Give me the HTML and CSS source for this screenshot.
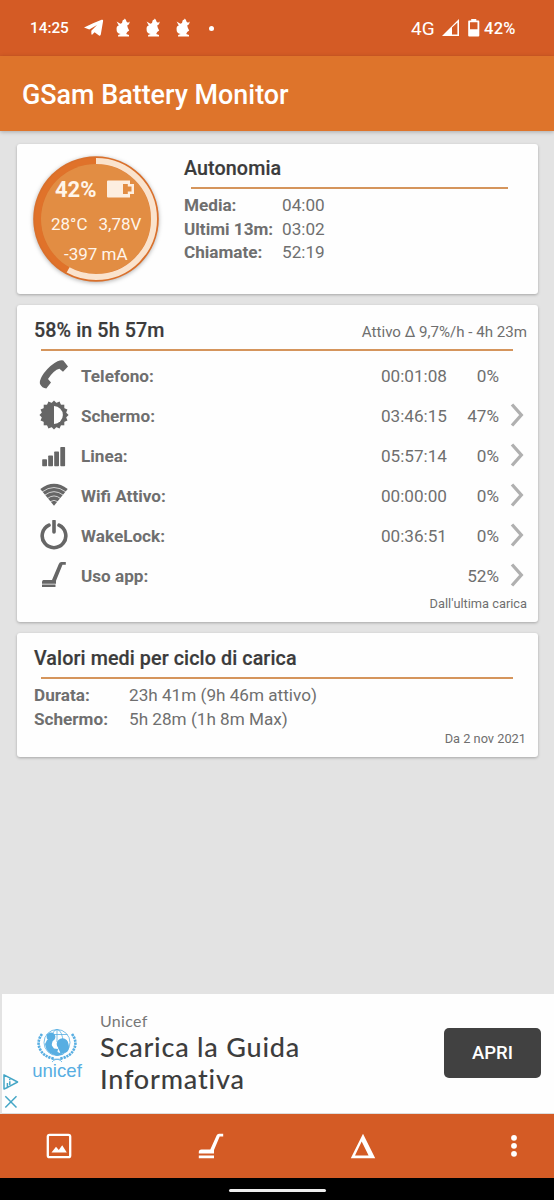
FILE: index.html
```html
<!DOCTYPE html>
<html lang="it">
<head>
<meta charset="utf-8">
<title>GSam Battery Monitor</title>
<link rel="stylesheet" href="styles.css">
</head>
<body>
<svg class="defs" width="0" height="0" aria-hidden="true">
  <symbol id="squirrel" viewBox="0 0 14 20">
    <path d="M6.6 2.6 Q7.2 1.6 8 1.8 L8.8.4 9.8 1.8 10.6 3.8 12 4.8 13.8 3.4 13 6.2 11.2 7.4 11.8 9.8 13.2 12.4 11.2 14 10.2 16 13 17 13 18.6H2L2.2 17 4.6 16 Q.4 15 .6 11.4 Q.2 8.4 2.8 7.6 L.6 3.6 4.4 5.8 6 5Z"/>
  </symbol>
  <symbol id="chevron" viewBox="0 0 14 24"><path d="M2 1.5 11.3 12 2 22.5" fill="none" stroke="#b0b0b0" stroke-width="3.3"/></symbol>
</svg>
<div class="screen">
  <header class="status">
    <span class="clock">14:25</span>
    <svg class="plane" width="20" height="18" viewBox="0 0 20 18"><path d="M0 8.6Q9 4 17.6.8 19.4.3 19.1 2L16.8 15.6Q16.4 17.2 15 16.4L10.6 13.2 8.4 15.5Q7.6 16 7.4 15L7.3 11.7 13 6 5.3 10.6Z"/></svg>
    <svg class="sq" width="14" height="20"><use href="#squirrel"/></svg>
    <svg class="sq" width="14" height="20"><use href="#squirrel"/></svg>
    <svg class="sq" width="14" height="20"><use href="#squirrel"/></svg>
    <i class="dot"></i>
    <span class="net">4G</span>
    <svg class="signal" width="18" height="18" viewBox="0 0 18 18"><path fill-rule="evenodd" d="M0 17 17 0V17ZM10 8.6V15.4H15.4V3.5Z"/></svg>
    <svg class="batt" width="12" height="18" viewBox="0 0 12 18"><path fill-rule="evenodd" d="M3.2 0H8.3V1.5H10.5Q11.3 1.5 11.3 2.4V16.5Q11.3 17.5 10.3 17.5H1.2Q.2 17.5.2 16.5V2.4Q.2 1.5 1 1.5H3.2ZM2 3.2V10.3H9.5V3.2Z"/></svg>
    <span class="level">42%</span>
  </header>
  <div class="appbar">GSam Battery Monitor</div>

  <main class="content">
    <section class="card runtime">
      <div class="gauge">
        <svg class="dial" width="128" height="128" viewBox="-64 -64 128 128">
          <circle r="62.8" fill="#d9702c"/>
          <circle r="58" fill="none" stroke="#e0722a" stroke-width="6"/>
          <circle r="55" fill="#e28d43"/>
          <circle r="58" fill="none" stroke="#fae3cd" stroke-width="6" pathLength="100" stroke-dasharray="58 42" transform="rotate(-90)"/>
        </svg>
        <div class="gauge-text">
          <div class="g1"><b>42%</b><svg width="28" height="18" viewBox="0 0 28 18"><path fill="#fdeee0" fill-rule="evenodd" d="M1 .5H23V4H27V14H23V17.5H1Q0 17.5 0 16.5V1.5Q0 .5 1 .5ZM16 4V14H20.8V11.5H24.5V6.5H20.8V4Z"/></svg></div>
          <div class="g2"><span>28°C</span><span>3,78V</span></div>
          <div class="g3">-397 mA</div>
        </div>
      </div>
      <div class="runtime-info">
        <h2>Autonomia</h2>
        <hr>
        <dl><dt>Media:</dt><dd>04:00</dd><dt>Ultimi 13m:</dt><dd>03:02</dd><dt>Chiamate:</dt><dd>52:19</dd></dl>
      </div>
    </section>

    <section class="card usage">
      <div class="head"><h2>58% in 5h 57m</h2><span class="rate">Attivo Δ 9,7%/h - 4h 23m</span></div>
      <hr>
      <div class="row">
        <svg width="30" height="30" viewBox="0 0 30 30"><path d="M1 24Q0 20 5 13Q11 5 18.5 1.2Q22.5-.3 24.3.5L29 6.6 24 11.7 20.4 8.8Q15 10 9 19L12 22.4 7.3 28.5Q3 28 1 24Z"/></svg>
        <span class="name">Telefono:</span><span class="time">00:01:08</span><span class="pct">0%</span>
      </div>
      <div class="row">
        <svg width="30" height="30" viewBox="-15 -15 30 30"><g><rect x="-10.3" y="-10.3" width="20.6" height="20.6"/><rect x="-10.3" y="-10.3" width="20.6" height="20.6" transform="rotate(22.5)"/><rect x="-10.3" y="-10.3" width="20.6" height="20.6" transform="rotate(45)"/><rect x="-10.3" y="-10.3" width="20.6" height="20.6" transform="rotate(67.5)"/></g><path d="M0-8.9A8.9 8.9 0 0 1 0 8.9Z" fill="#fff"/></svg>
        <span class="name">Schermo:</span><span class="time">03:46:15</span><span class="pct">47%</span><svg class="chev" width="14" height="24"><use href="#chevron"/></svg>
      </div>
      <div class="row">
        <svg width="30" height="30" viewBox="0 0 30 30"><rect x="3.2" y="19.2" width="4.8" height="7" rx=".7"/><rect x="9.2" y="15.5" width="4.8" height="10.7" rx=".7"/><rect x="15.2" y="11.5" width="4.8" height="14.7" rx=".7"/><rect x="21.3" y="7" width="4.8" height="19.2" rx=".7"/></svg>
        <span class="name">Linea:</span><span class="time">05:57:14</span><span class="pct">0%</span><svg class="chev" width="14" height="24"><use href="#chevron"/></svg>
      </div>
      <div class="row">
        <svg width="30" height="30" viewBox="0 0 30 30"><path d="M1.3 9Q15-1.5 28.7 9L15 25.7Z"/><g fill="none" stroke="#fff" stroke-width=".7"><path d="M3 12Q15 3 27 12M5.5 15.3Q15 8 24.5 15.3M8.3 18.6Q15 13.3 21.7 18.6M11 21.8Q15 18.8 19 21.8"/></g></svg>
        <span class="name">Wifi Attivo:</span><span class="time">00:00:00</span><span class="pct">0%</span><svg class="chev" width="14" height="24"><use href="#chevron"/></svg>
      </div>
      <div class="row">
        <svg width="30" height="30" viewBox="0 0 30 30"><path d="M10 5.2A11.8 11.8 0 1 0 20 5.2M15 1.2V12" fill="none" stroke="#666" stroke-width="3.6" stroke-linecap="round"/></svg>
        <span class="name">WakeLock:</span><span class="time">00:36:51</span><span class="pct">0%</span><svg class="chev" width="14" height="24"><use href="#chevron"/></svg>
      </div>
      <div class="row">
        <svg width="30" height="30" viewBox="0 0 30 30"><path d="M4.5 20H13L19.8 4Q20.5 2 22.5 2H26.8V4.8H23.5L17 20.8V23.7H3Q2.8 20 4.5 20ZM3 24.5H16.5V27H3Z"/></svg>
        <span class="name">Uso app:</span><span class="time"></span><span class="pct">52%</span><svg class="chev" width="14" height="24"><use href="#chevron"/></svg>
      </div>
      <div class="foot">Dall'ultima carica</div>
    </section>

    <section class="card averages">
      <h2>Valori medi per ciclo di carica</h2>
      <hr>
      <dl><dt>Durata:</dt><dd>23h 41m (9h 46m attivo)</dd><dt>Schermo:</dt><dd>5h 28m (1h 8m Max)</dd></dl>
      <div class="foot">Da 2 nov 2021</div>
    </section>
  </main>

  <aside class="ad">
    <div class="ad-marks">
      <svg width="16" height="16" viewBox="0 0 16 16" fill="none" stroke="#45a6c6" stroke-width="1.5"><path d="M4.6 13.3 14.6 8 1 .9V15.1L4.4 13.5V9" stroke-linejoin="round"/><path d="M6.8 7.2V11M6.8 4.9V6.2"/></svg>
      <svg width="14" height="14" viewBox="0 0 14 14" fill="none" stroke="#45a6c6" stroke-width="1.5"><path d="M1.3 1.3 12.5 12.5M12.5 1.3 1.3 12.5"/></svg>
    </div>
    <div class="brand">
      <svg width="42" height="35" viewBox="0 0 42 35">
        <g fill="none" stroke="#58aee2" stroke-width=".8"><circle cx="21" cy="14.5" r="13"/><ellipse cx="21" cy="14.5" rx="6" ry="13"/><path d="M21 1.5V14M10.5 6.5H31.5"/><path d="M16 34Q19 30 26 31.5M26 34Q23 30 16 31.5"/></g>
        <g fill="none" stroke="#58aee2" stroke-width="2.6" stroke-dasharray="2.3 .8"><path d="M6 6Q0 14 4.5 22Q8 29 18 30.5M36 6Q42 14 37.5 22Q34 29 24 30.5"/></g>
        <g fill="#58aee2"><circle cx="15" cy="8.8" r="4.4"/><path d="M11 12 17 12 15.5 17 18 20.5 22 21 21.5 24 24 25 28 26Q23 28.5 17 26.5 10 24 9 16Z"/><circle cx="26.5" cy="16" r="5.8"/><path d="M22 20 32 15Q34.5 21 31 24L25 26Z"/></g>
      </svg>
      <span>unicef</span>
    </div>
    <div class="ad-copy"><div class="adv">Unicef</div><div class="headline">Scarica la Guida<br>Informativa</div></div>
    <div class="cta">APRI</div>
  </aside>

  <nav class="tabs">
    <svg width="26" height="26" viewBox="0 0 26 26"><rect x="1.8" y="1.8" width="22.4" height="22.4" rx="1.8" fill="none" stroke="#fff" stroke-width="2.3"/><path d="M5.5 19.5 10 13.8 12.8 17 16.2 12.3 20.8 19.5Z"/></svg>
    <svg width="26" height="26" viewBox="0 0 26 26"><path d="M3.5 16.5H12.3L18.7 2.3Q19.3.8 21 .8H25.2V3.6H21.7L16 17V20.6H.8V19Q.8 16.7 3.5 16.5ZM.8 22.5H16V25.2H.8Z"/></svg>
    <svg width="26" height="26" viewBox="0 0 26 26"><path fill-rule="evenodd" d="M13 .8 25.2 25.2H.8ZM11.7 8.5 5 22.4H18.6Z"/></svg>
    <svg width="8" height="26" viewBox="0 0 8 26"><circle cx="4" cy="4.8" r="2.9"/><circle cx="4" cy="12.8" r="2.9"/><circle cx="4" cy="20.8" r="2.9"/></svg>
  </nav>
  <div class="gesture"><i></i></div>
</div>
</body>
</html>
```
FILE: styles.css
```css
* { box-sizing: border-box; margin: 0; padding: 0; }
body { width: 554px; height: 1200px; overflow: hidden; background: #e3e3e3; font-family: Roboto, sans-serif; color: #6f6f6f; }
.defs { position: absolute; }
svg { display: block; flex: none; }
.screen { width: 554px; height: 1200px; display: flex; flex-direction: column; }
.status { height: 56px; background: #d45b25; color: #fff; fill: #fff; display: flex; align-items: center; padding-left: 30px; font-size: 15.3px; font-weight: 500; white-space: nowrap; }
.clock { width: 54px; }
.plane { margin-right: 12px; }
.sq { margin-right: 16px; }
.dot { width: 5px; height: 5px; border-radius: 50%; background: #fff; margin-left: 3px; }
.net { margin-left: 197px; width: 31px; font-size: 19px; font-weight: 400; }
.batt { margin-left: 8px; }
.level { margin-left: 4px; font-size: 16.5px; letter-spacing: .3px; }
.appbar { height: 75px; background: #de742b; color: #fff; font-size: 26.9px; font-weight: 500; line-height: 79px; padding-left: 22px; box-shadow: 0 1px 4px rgba(0,0,0,.25); white-space: nowrap; }
.content { flex: 1; padding: 13px 16px 0 17px; display: flex; flex-direction: column; gap: 11px; }
.card { background: #fefefe; border-radius: 3px; box-shadow: 0 1px 3px rgba(0,0,0,.27); }
h2 { font-size: 19.7px; font-weight: 500; color: #3b3b3b; line-height: 24px; white-space: nowrap; -webkit-text-stroke: .2px #3b3b3b; letter-spacing: .1px; }
hr { border: 0; height: 2px; background: #d5955c; }
dl { display: grid; line-height: 23.7px; font-size: 17.15px; white-space: nowrap; }
dt { font-weight: 700; }
.runtime { height: 150px; display: flex; padding: 11px 30px 0 15px; }
.gauge { display: grid; width: 128px; height: 128px; margin-right: 24px; }
.gauge > * { grid-area: 1 / 1; }
.dial { filter: drop-shadow(0 1px 2px rgba(0,0,0,.3)); }
.gauge-text { color: #fff5ea; font-size: 17px; z-index: 1; white-space: nowrap; }
.g1 { display: flex; align-items: center; gap: 10px; font-size: 22px; height: 24px; padding-left: 23px; margin-top: 22px; }
.g2 { display: flex; gap: 11px; padding-left: 19px; line-height: 24px; margin-top: 11px; }
.g3 { padding-left: 32px; line-height: 24px; margin-top: 6px; }
.runtime-info { flex: 1; padding-top: 2px; }
.runtime-info hr { margin: 6px 0 5px 7px; }
.runtime-info dl { grid-template-columns: 98px 1fr; }
.usage { height: 317px; padding: 14px 11px 0 17px; }
.head { display: flex; justify-content: space-between; line-height: 24px; }
.rate { font-size: 15.1px; line-height: 27px; height: 24px; }
.usage hr, .averages hr { margin: 6px 14px 0 7px; }
.row { height: 40px; display: flex; align-items: center; fill: #666; font-size: 17.15px; padding-left: 5px; }
.row svg { margin-bottom: 2px; }
.usage hr + .row { margin-top: 5px; }
.name { margin-left: 12px; font-weight: 700; flex: 1; }
.time { width: 80px; text-align: right; }
.pct { width: 52px; text-align: right; margin-right: 28px; }
.pct:not(:last-child) { margin-right: 11px; }
.chev { margin-right: 3px; }
.foot { text-align: right; font-size: 12.8px; line-height: 16px; }
.averages { height: 124px; padding: 14px 12px 0 17px; }
.averages dl { grid-template-columns: 95px 1fr; margin-top: 5px; }
.averages hr { margin-right: 13px; }
.ad { height: 120px; background: #fefefe; margin-left: 2px; display: flex; border-bottom: 1px solid #ddd; }
.ad-marks { width: 30px; padding: 80px 0 0 1px; display: flex; flex-direction: column; gap: 5px; }
.ad-marks svg + svg { margin-left: 1px; }
.brand { width: 50px; padding-top: 34px; display: flex; flex-direction: column; align-items: center; color: #58aee2; font: 18.6px/16px "Liberation Sans", sans-serif; }
.ad-copy { margin-left: 18px; padding-top: 17px; width: 344px; font-family: Lato, sans-serif; }
.adv { font-size: 16px; line-height: 20px; color: #777; letter-spacing: .3px; }
.headline { font-size: 27px; line-height: 31.5px; color: #3d3d3d; font-weight: 500; letter-spacing: .8px; white-space: nowrap; }
.cta { width: 97px; height: 50px; margin-top: 34px; border-radius: 5px; background: #414141; color: #fff; text-align: center; line-height: 51px; font-size: 18.5px; font-weight: 500; }
.tabs { height: 64px; background: #d45b25; fill: #fff; display: flex; gap: 126px; align-items: center; padding-left: 46px; }
.tabs svg:last-child { margin-left: 8px; }
.gesture { height: 22px; background: #000; display: flex; justify-content: center; padding-top: 11px; }
.gesture i { width: 97px; height: 3px; border-radius: 2px; background: #eee; }
```
